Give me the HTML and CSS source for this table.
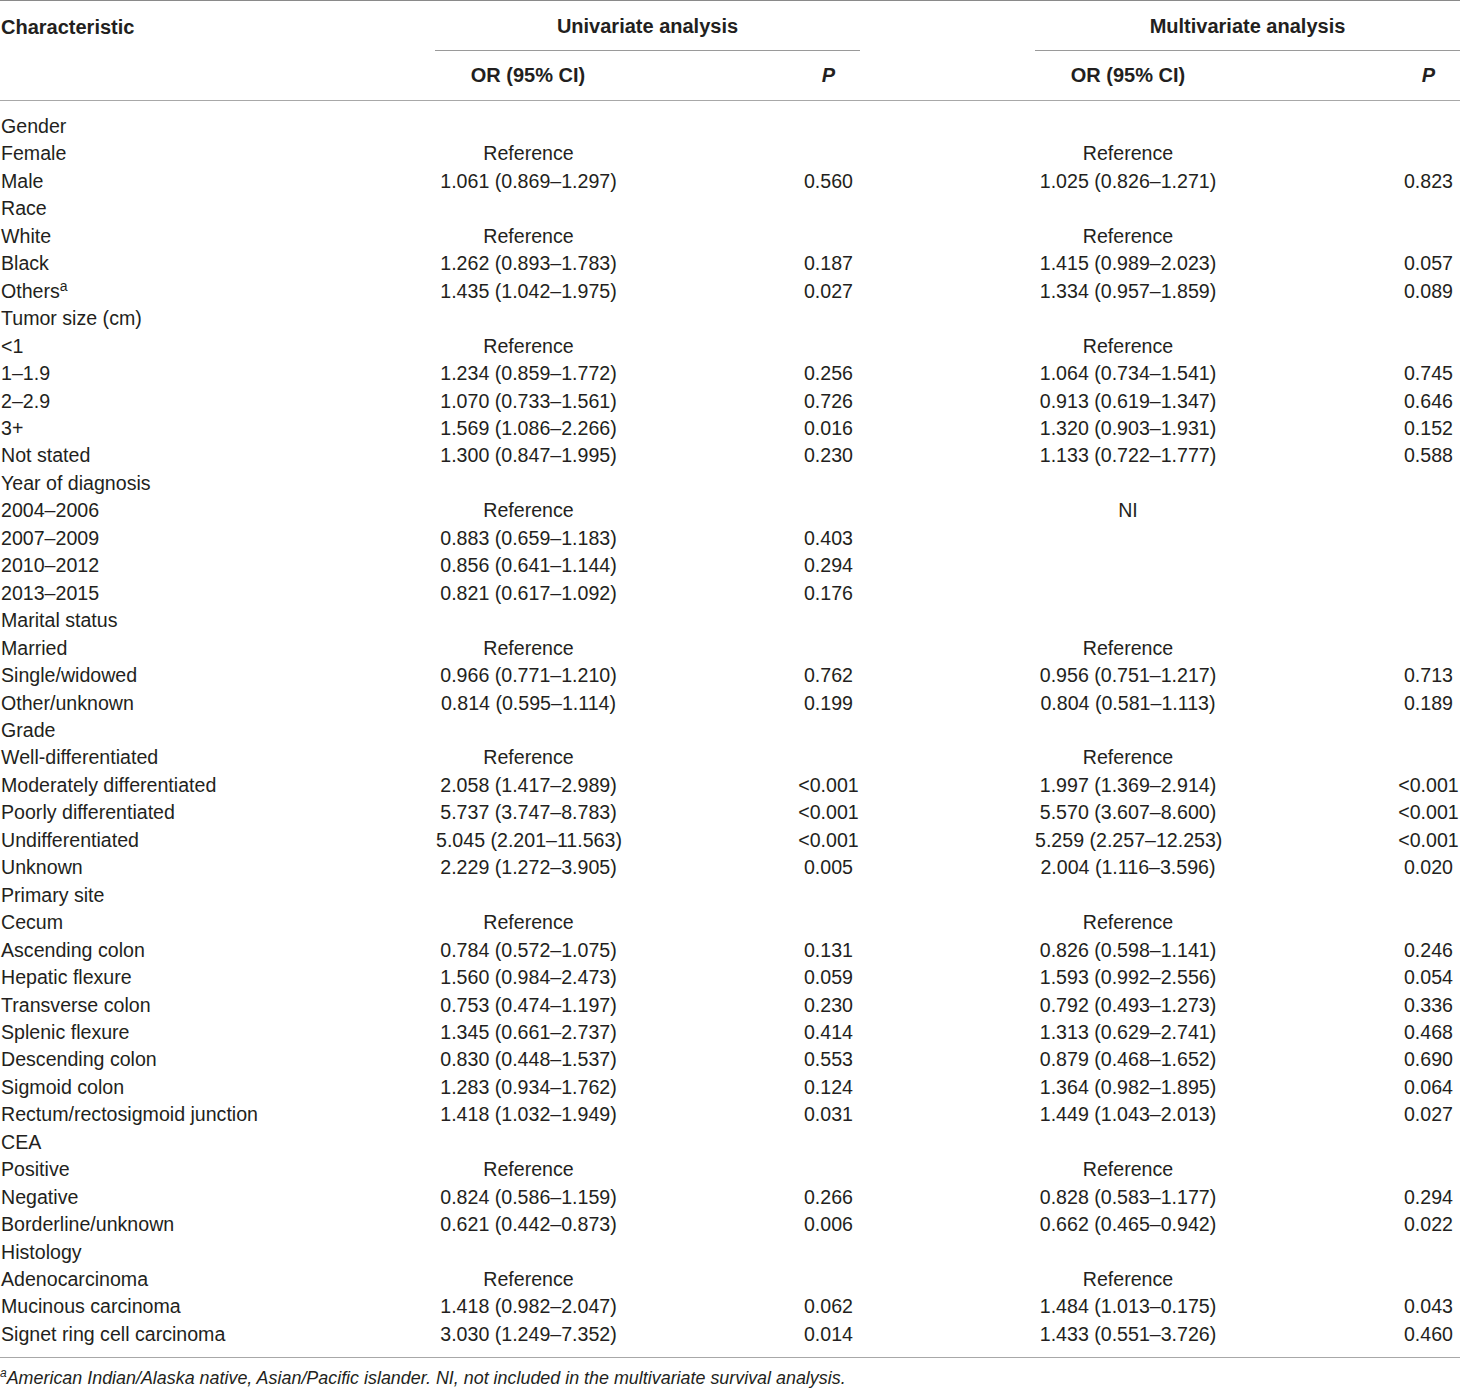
FILE: index.html
```html
<!DOCTYPE html>
<html lang="en">

<head>
    <meta charset="UTF-8">
    <meta name="viewport" content="width=device-width, initial-scale=1.0">
    <title>Logistic regression</title>
    <link rel="stylesheet" href="styles.css">
</head>

<body>

    <table class="results">
        <colgroup>
            <col class="c-name">
            <col class="c-or">
            <col class="c-p">
            <col class="c-or2">
            <col class="c-p">
        </colgroup>
        <thead>
            <tr class="head1">
                <th class="name">Characteristic</th>
                <th colspan="2"><div class="span uni">Univariate analysis</div></th>
                <th colspan="2"><div class="span multi">Multivariate analysis</div></th>
            </tr>
            <tr class="head2">
                <th></th>
                <th class="or">OR (95% CI)</th>
                <th class="p"><i>P</i></th>
                <th class="or2">OR (95% CI)</th>
                <th class="p"><i>P</i></th>
            </tr>
        </thead>
        <tbody>
            <tr class="first"><td>Gender</td><td></td><td></td><td></td><td></td></tr>
            <tr><td>Female</td><td class="or">Reference</td><td class="p"></td><td class="or2">Reference</td><td class="p"></td></tr>
            <tr><td>Male</td><td class="or">1.061 (0.869–1.297)</td><td class="p">0.560</td><td class="or2">1.025 (0.826–1.271)</td><td class="p">0.823</td></tr>
            <tr><td>Race</td><td></td><td></td><td></td><td></td></tr>
            <tr><td>White</td><td class="or">Reference</td><td class="p"></td><td class="or2">Reference</td><td class="p"></td></tr>
            <tr><td>Black</td><td class="or">1.262 (0.893–1.783)</td><td class="p">0.187</td><td class="or2">1.415 (0.989–2.023)</td><td class="p">0.057</td></tr>
            <tr><td>Others<sup>a</sup></td><td class="or">1.435 (1.042–1.975)</td><td class="p">0.027</td><td class="or2">1.334 (0.957–1.859)</td><td class="p">0.089</td></tr>
            <tr><td>Tumor size (cm)</td><td></td><td></td><td></td><td></td></tr>
            <tr><td>&lt;1</td><td class="or">Reference</td><td class="p"></td><td class="or2">Reference</td><td class="p"></td></tr>
            <tr><td>1–1.9</td><td class="or">1.234 (0.859–1.772)</td><td class="p">0.256</td><td class="or2">1.064 (0.734–1.541)</td><td class="p">0.745</td></tr>
            <tr><td>2–2.9</td><td class="or">1.070 (0.733–1.561)</td><td class="p">0.726</td><td class="or2">0.913 (0.619–1.347)</td><td class="p">0.646</td></tr>
            <tr><td>3+</td><td class="or">1.569 (1.086–2.266)</td><td class="p">0.016</td><td class="or2">1.320 (0.903–1.931)</td><td class="p">0.152</td></tr>
            <tr><td>Not stated</td><td class="or">1.300 (0.847–1.995)</td><td class="p">0.230</td><td class="or2">1.133 (0.722–1.777)</td><td class="p">0.588</td></tr>
            <tr><td>Year of diagnosis</td><td></td><td></td><td></td><td></td></tr>
            <tr><td>2004–2006</td><td class="or">Reference</td><td class="p"></td><td class="or2">NI</td><td class="p"></td></tr>
            <tr><td>2007–2009</td><td class="or">0.883 (0.659–1.183)</td><td class="p">0.403</td><td class="or2"></td><td class="p"></td></tr>
            <tr><td>2010–2012</td><td class="or">0.856 (0.641–1.144)</td><td class="p">0.294</td><td class="or2"></td><td class="p"></td></tr>
            <tr><td>2013–2015</td><td class="or">0.821 (0.617–1.092)</td><td class="p">0.176</td><td class="or2"></td><td class="p"></td></tr>
            <tr><td>Marital status</td><td></td><td></td><td></td><td></td></tr>
            <tr><td>Married</td><td class="or">Reference</td><td class="p"></td><td class="or2">Reference</td><td class="p"></td></tr>
            <tr><td>Single/widowed</td><td class="or">0.966 (0.771–1.210)</td><td class="p">0.762</td><td class="or2">0.956 (0.751–1.217)</td><td class="p">0.713</td></tr>
            <tr><td>Other/unknown</td><td class="or">0.814 (0.595–1.114)</td><td class="p">0.199</td><td class="or2">0.804 (0.581–1.113)</td><td class="p">0.189</td></tr>
            <tr><td>Grade</td><td></td><td></td><td></td><td></td></tr>
            <tr><td>Well-differentiated</td><td class="or">Reference</td><td class="p"></td><td class="or2">Reference</td><td class="p"></td></tr>
            <tr><td>Moderately differentiated</td><td class="or">2.058 (1.417–2.989)</td><td class="p">&lt;0.001</td><td class="or2">1.997 (1.369–2.914)</td><td class="p">&lt;0.001</td></tr>
            <tr><td>Poorly differentiated</td><td class="or">5.737 (3.747–8.783)</td><td class="p">&lt;0.001</td><td class="or2">5.570 (3.607–8.600)</td><td class="p">&lt;0.001</td></tr>
            <tr><td>Undifferentiated</td><td class="or">5.045 (2.201–11.563)</td><td class="p">&lt;0.001</td><td class="or2">5.259 (2.257–12.253)</td><td class="p">&lt;0.001</td></tr>
            <tr><td>Unknown</td><td class="or">2.229 (1.272–3.905)</td><td class="p">0.005</td><td class="or2">2.004 (1.116–3.596)</td><td class="p">0.020</td></tr>
            <tr><td>Primary site</td><td></td><td></td><td></td><td></td></tr>
            <tr><td>Cecum</td><td class="or">Reference</td><td class="p"></td><td class="or2">Reference</td><td class="p"></td></tr>
            <tr><td>Ascending colon</td><td class="or">0.784 (0.572–1.075)</td><td class="p">0.131</td><td class="or2">0.826 (0.598–1.141)</td><td class="p">0.246</td></tr>
            <tr><td>Hepatic flexure</td><td class="or">1.560 (0.984–2.473)</td><td class="p">0.059</td><td class="or2">1.593 (0.992–2.556)</td><td class="p">0.054</td></tr>
            <tr><td>Transverse colon</td><td class="or">0.753 (0.474–1.197)</td><td class="p">0.230</td><td class="or2">0.792 (0.493–1.273)</td><td class="p">0.336</td></tr>
            <tr><td>Splenic flexure</td><td class="or">1.345 (0.661–2.737)</td><td class="p">0.414</td><td class="or2">1.313 (0.629–2.741)</td><td class="p">0.468</td></tr>
            <tr><td>Descending colon</td><td class="or">0.830 (0.448–1.537)</td><td class="p">0.553</td><td class="or2">0.879 (0.468–1.652)</td><td class="p">0.690</td></tr>
            <tr><td>Sigmoid colon</td><td class="or">1.283 (0.934–1.762)</td><td class="p">0.124</td><td class="or2">1.364 (0.982–1.895)</td><td class="p">0.064</td></tr>
            <tr><td>Rectum/rectosigmoid junction</td><td class="or">1.418 (1.032–1.949)</td><td class="p">0.031</td><td class="or2">1.449 (1.043–2.013)</td><td class="p">0.027</td></tr>
            <tr><td>CEA</td><td></td><td></td><td></td><td></td></tr>
            <tr><td>Positive</td><td class="or">Reference</td><td class="p"></td><td class="or2">Reference</td><td class="p"></td></tr>
            <tr><td>Negative</td><td class="or">0.824 (0.586–1.159)</td><td class="p">0.266</td><td class="or2">0.828 (0.583–1.177)</td><td class="p">0.294</td></tr>
            <tr><td>Borderline/unknown</td><td class="or">0.621 (0.442–0.873)</td><td class="p">0.006</td><td class="or2">0.662 (0.465–0.942)</td><td class="p">0.022</td></tr>
            <tr><td>Histology</td><td></td><td></td><td></td><td></td></tr>
            <tr><td>Adenocarcinoma</td><td class="or">Reference</td><td class="p"></td><td class="or2">Reference</td><td class="p"></td></tr>
            <tr><td>Mucinous carcinoma</td><td class="or">1.418 (0.982–2.047)</td><td class="p">0.062</td><td class="or2">1.484 (1.013–0.175)</td><td class="p">0.043</td></tr>
            <tr class="last"><td>Signet ring cell carcinoma</td><td class="or">3.030 (1.249–7.352)</td><td class="p">0.014</td><td class="or2">1.433 (0.551–3.726)</td><td class="p">0.460</td></tr>
        </tbody>
    </table>

    <p class="note"><sup>a</sup>American Indian/Alaska native, Asian/Pacific islander. NI, not included in the multivariate survival analysis.</p>

</body>

</html>
```
FILE: styles.css
```css
html,
body {
    margin: 0;
    padding: 0;
    background: #fff;
}

body {
    font-family: "Liberation Sans", Arial, sans-serif;
    color: #231f20;
}

.results {
    width: 1460px;
    border-collapse: collapse;
    table-layout: fixed;
    border-top: 1px solid #8a8a8a;
    border-bottom: 1px solid #a8a8a8;
}

.c-name {
    width: 435px;
}

.c-or {
    width: 186px;
}

.c-p {
    width: 239px;
}

.c-or2 {
    width: 361px;
}

th {
    font-size: 20px;
    font-weight: bold;
    padding: 0;
    line-height: 49px;
}

.head1 th {
    text-align: center;
    padding-top: 1px;
    line-height: 48px;
}

.head1 .name {
    text-align: left;
    padding-left: 1px;
}

.span {
    border-bottom: 1px solid #9a9a9a;
}

.multi {
    margin-left: 175px;
}

.head2 th {
    border-bottom: 1px solid #a8a8a8;
}

td {
    font-size: 19.6px;
    line-height: 27.45px;
    padding: 0 0 0 1px;
    white-space: nowrap;
}

.or {
    text-align: center;
}

.or2 {
    text-align: center;
    padding-left: 175px;
}

.p {
    text-align: center;
    padding-left: 176px;
}

th.p i {
    font-style: italic;
}

.first td {
    padding-top: 12px;
}

.last td {
    padding-bottom: 9px;
}

sup {
    font-size: 14px;
    line-height: 0;
    vertical-align: 7px;
}

.note {
    margin: 8px 0 0;
    font-size: 17.9px;
    font-style: italic;
    line-height: 24px;
}

.note sup {
    font-size: 12px;
    vertical-align: 7px;
}
```
